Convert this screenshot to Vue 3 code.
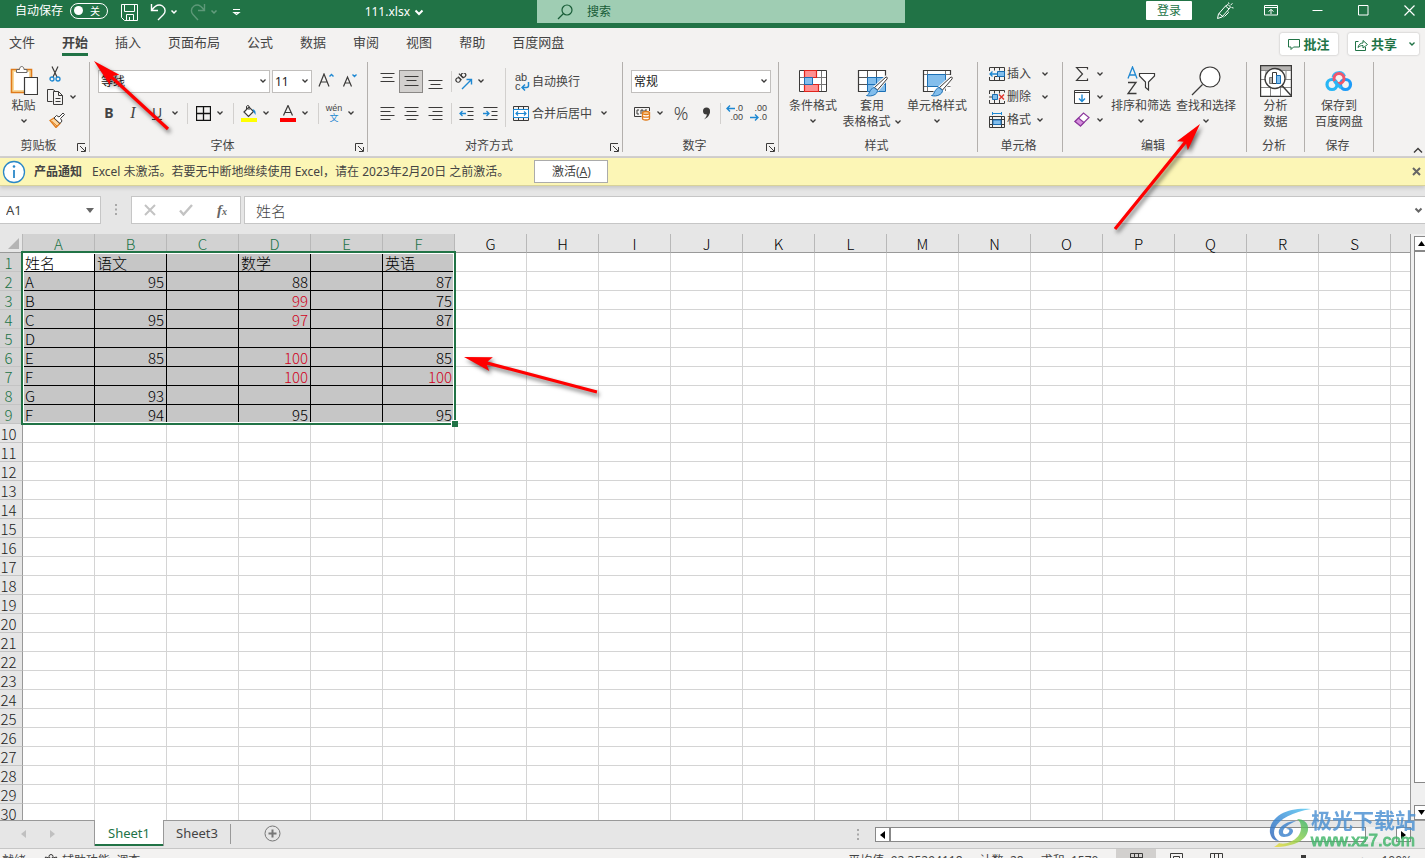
<script setup>
import { h } from 'vue'

const D = '#3b3a39'
const B = '#1e88d2'
const F = '#83beec'

// name: [width, height, markup]
const icons = {
  chev: [8, 6, `<path d="M1.5 1.5l2.5 2.5 2.5-2.5" stroke="${D}" stroke-width="1.3"/>`],
  chevWhite: [8, 6, '<path d="M1.5 1.5l2.5 2.5 2.5-2.5" stroke="#fff" stroke-width="1.5"/>'],
  chevBig: [10, 7, '<path d="M1.5 1.5l3.5 3.5 3.5-3.5" stroke="#fff" stroke-width="2"/>'],
  chevGrey: [9, 7, '<path d="M1.5 1.5l3 3 3-3" stroke="#666" stroke-width="2"/>'],
  chevGreen: [8, 6, '<path d="M1.5 1.5l2.5 2.5 2.5-2.5" stroke="#217346" stroke-width="1.4"/>'],
  collapse: [10, 7, `<path d="M1 5.500l4-4 4 4" stroke="${D}" stroke-width="1.400"/>`],
  save: [17, 17, '<path d="M.5.5h16v16h-13l-3-3zM3.500.5v7h10v-7M5.500 16.500v-6h7v6M8.500 13v3" stroke="#fff"/>'],
  undo: [17, 18, '<path d="M1.500 1v6.500h6.500M1.500 7.500C5 2.500 9 1 12.500 3c3.500 2.500 3 6.500 1 8.500L8 17" stroke="#fff" stroke-width="1.400"/>'],
  redo: [17, 18, '<path d="M14.500 1v6.500h-6.500M14.500 7.500C11 2.500 7 1 4 3 .5 5.500 1 9.500 3 11.500L8 17" stroke="#5d9878" stroke-width="1.400"/>'],
  qat: [9, 8, '<path d="M1 1.500h7M2 4.500l2.500 2 2.500-2z" stroke="#fff" stroke-width="1.200"/>'],
  search: [16, 16, '<circle cx="10" cy="6" r="5" stroke="#185c37" stroke-width="1.200"/><path d="M6.500 9.500L1 15" stroke="#185c37" stroke-width="1.300"/>'],
  pen: [18, 18, '<path d="M1.500 16.500l1-4.500 7-8 3.500 3-7 8zM3 11.500l4.500 3.500M9.500 4l2.500-1.500 2.500 2.500-1.500 2M12 9.500l.5 1-4 4M12.500.5l.5 1.500M16.500 1.500l-2 1.500M17.500 6l-2-.5" stroke="#fff"/>'],
  ribbonOpt: [14, 11, '<path d="M.5.5h13v9.500h-13zM.5 2.500h13M7 9V4.500M4.500 6.500L7 4.500l2.500 2" stroke="#fff"/>'],
  min: [11, 11, '<path d="M.5 5.500h10" stroke="#fff"/>'],
  max: [11, 11, '<path d="M.5.5h9.500v9.500h-9.500z" stroke="#fff"/>'],
  close: [11, 11, '<path d="M.5.5l10 10M10.500.5l-10 10" stroke="#fff" stroke-width="1.200"/>'],
  comment: [12, 11, '<path d="M.5.5h11v7.500h-6L3 10.500V8H.5z" stroke="#217346"/>'],
  share: [13, 13, '<path d="M3.500 3.500h-3v9h10v-3.500M3 9.500c.5-3 2.500-4.500 5-4.500V2.500l4.500 4-4.500 3.500V7.500C6 7.500 4.500 8 3 9.500z" stroke="#217346"/>'],
  paste: [28, 31, `<path d="M1.500 4.500h20v23h-20z" fill="#f9d999" stroke="#e07b1a" stroke-width="1.600"/><path d="M4 7h15v18H4z" fill="#fff"/><path d="M6.500 7.500v-3h3c0-4 4.500-4 4.500 0h3v3z" fill="#fff" stroke="#6b6967"/><path d="M14.500 12.500h13v17h-13z" fill="#fff" stroke="${D}" stroke-width="1.200"/>`],
  cut: [12, 16, `<path d="M3 .5l5 10.500M9 .5L4 11" stroke="${D}" stroke-width="1.200"/><circle cx="3" cy="13" r="2" stroke="${B}" stroke-width="1.300"/><circle cx="9" cy="13" r="2" stroke="${B}" stroke-width="1.300"/>`],
  copy: [16, 17, `<path d="M5.500 13.500h-5V1.500h5.500l2.500 2M6.500 3.500h5l4 4v9h-9z" stroke="${D}"/><path d="M11.500 3.500v4h4M8.500 10.500h5M8.500 13.500h5" stroke="${D}"/>`],
  brush: [16, 16, `<path d="M1 8.500l4-2.500 6 5.500-4 4z" fill="#fbd9a5" stroke="#e07b1a" stroke-width="1.300"/><path d="M3 9.500l5 4.500" stroke="#e07b1a"/><path d="M5 6l2.500-2.500L10 5l4-4 1.500 1.500-4 4 1.500 2.500-2 2.500z" fill="#fff" stroke="${D}"/>`],
  launcher: [9, 9, `<path d="M.5 8V.5H8M3 3l5 5M8.500 4v4.500H4" stroke="${D}"/>`],
  growA: [17, 16, `<path d="M1 13.500L6 1l5 12.500M3 9h6" stroke="${D}" stroke-width="1.200"/><path d="M11.500 3.500l2-2 2 2" stroke="${B}" stroke-width="1.400"/>`],
  shrinkA: [17, 16, `<path d="M1.500 13.500L5.500 4l4 9.500M3 10h5" stroke="${D}" stroke-width="1.200"/><path d="M10.500 1.500l2 2 2-2" stroke="${B}" stroke-width="1.400"/>`],
  borders: [15, 15, '<path d="M.5.5h14v14H.5zM7.500 0v15M0 7.500h15" stroke="#111" stroke-width="1.300"/>'],
  bucket: [16, 17, `<path d="M3 7l5-5 4.500 4.500-5 5z" fill="#fff" stroke="${D}" stroke-width="1.200"/><path d="M8 5V1.500c0-1.500-2.500-1.500-2.500.5v2" stroke="${D}"/><path d="M11.500 4c2.500.5 3.500 2.500 3 6l-2-3z" fill="${B}"/><path d="M0 13h16v4H0z" fill="#ffff00"/>`],
  fontColor: [16, 17, `<path d="M3.500 10.500L8 .5l4.500 10M5 7.500h6" stroke="${D}" stroke-width="1.200"/><path d="M0 13h16v4H0z" fill="#ff0000"/>`],
  alTop: [15, 17, `<path d="M.5.5h14M2.500 4.500h10M.5 8.500h14" stroke="${D}"/>`],
  alMid: [15, 17, `<path d="M.5 3.500h14M2.500 7.500h10M.5 12.500h14" stroke="${D}"/>`],
  alBot: [15, 17, `<path d="M.5 7.500h14M2.500 11.500h10M.5 15.500h14" stroke="${D}"/>`],
  alL: [15, 15, `<path d="M.5 1.500h14M.5 5.500h10M.5 9.500h14M.5 13.500h10" stroke="${D}"/>`],
  alC: [15, 15, `<path d="M.5 1.500h14M2.500 5.500h10M.5 9.500h14M2.500 13.500h10" stroke="${D}"/>`],
  alR: [15, 15, `<path d="M.5 1.500h14M4.500 5.500h10M.5 9.500h14M4.500 13.500h10" stroke="${D}"/>`],
  outdent: [15, 15, `<path d="M.5 1.500h14M8.500 5.500h6M8.500 9.500h6M.5 13.500h14" stroke="${D}"/><path d="M7 7.500H1M3.500 5L1 7.500 3.500 10" stroke="${B}" stroke-width="1.300"/>`],
  indent: [15, 15, `<path d="M.5 1.500h14M8.500 5.500h6M8.500 9.500h6M.5 13.500h14" stroke="${D}"/><path d="M0 7.500h6M3.500 5L6 7.500 3.500 10" stroke="${B}" stroke-width="1.300"/>`],
  orient: [18, 17, `<g transform="rotate(-45 6 7)" stroke="${D}" stroke-width="1.200"><circle cx="4" cy="5" r="2.200"/><path d="M6.300 2.500v5M9 1v6.500"/><circle cx="11.300" cy="5.300" r="2.200"/></g><path d="M7 16l9-9M11.500 6.500h5v5" stroke="${B}" stroke-width="1.400"/>`],
  wrapArrow: [9, 9, `<path d="M7.500 0v3.500c0 1.500-1 2-2 2H1.500M4 2.500L1 5.500l3 3" stroke="${B}" stroke-width="1.500"/>`],
  merge: [16, 15, `<path d="M.5.5h15v14H.5zM5.500.5v3M10.500.5v3M5.500 11.500v3M10.500 11.500v3" stroke="${D}"/><path d="M.5 3.500h15v8H.5z" fill="#fff" stroke="${B}"/><path d="M3 7.500h10M5 5.500l-2 2 2 2M11 5.500l2 2-2 2" stroke="${B}" stroke-width="1.200"/>`],
  currency: [17, 15, `<path d="M15.500 5V1.500H.5v9h7M5 4H3v4h2M7 8V4h2v4M11 8V4h2" stroke="${D}"/><path d="M8.500 7v5.500c0 2 7 2 7 0V7z" fill="#fff" stroke="#e07b1a" stroke-width="1.300"/><ellipse cx="12" cy="7" rx="3.500" ry="1.500" fill="#fbd9a5" stroke="#e07b1a" stroke-width="1.300"/><path d="M8.500 10c0 1.600 7 1.600 7 0" stroke="#e07b1a" stroke-width="1.300"/>`],
  comma: [9, 13, `<circle cx="4.500" cy="4" r="3.500" fill="${D}"/><path d="M8 4c0 4-2.500 7-6 8.500 2-2 3-4 3-6z" fill="${D}"/>`],
  arrL: [9, 7, `<path d="M9 3.500H1M4 .5L1 3.500l3 3" stroke="${B}" stroke-width="1.400"/>`],
  arrR: [9, 7, `<path d="M0 3.500h8M5 .5l3 3-3 3" stroke="${B}" stroke-width="1.400"/>`],
  condFmt: [28, 22, `<path d="M.5.5h27v21H.5z" fill="#fff"/><path d="M.5 7.500h27M.5 14.500h27M5.500 0v22M22.500 0v22" stroke="#777"/><path d="M.5.5h27v21H.5z" stroke="${D}"/><path d="M5.500.5h12v7h-12zM5.500 14.500h14v7h-14z" fill="#ff9090" stroke="#e0241b" stroke-width="1.200"/><path d="M5.500 7.500h8v7h-8z" fill="${F}" stroke="#1a6fb5"/>`],
  tableFmt: [32, 27, `<path d="M1.500.5h27v21h-27z" fill="#fff"/><path d="M10.500 7.500h18v14h-18z" fill="${F}"/><path d="M1.500 7.500h27M1.500 14.500h27M10.500 0v21M19.500 0v21" stroke="#555"/><path d="M28.500 7V.5h-27v21h9" stroke="${D}" stroke-width="1.200"/><path d="M10.500 7.500h18v14h-18zM10.500 14.500h18M19.500 7.500v14" stroke="#1a6fb5"/><path d="M29 7c1.500 0 1.500 1 1 2l-9.500 11-3-2.500z" fill="#fff" stroke="#f3f2f1" stroke-width="3"/><path d="M29 7c1.500 0 1.500 1 1 2l-9.500 11-3-2.500z" fill="#fff" stroke="${D}"/><path d="M17 17.500l3.500 3c0 4-6 6.500-11 5 3 0 2.500-6.500 7.500-8z" fill="${F}" stroke="#1a6fb5"/>`],
  cellStyle: [32, 27, `<path d="M1.500.5h27v21h-27z" fill="#fff"/><path d="M5.500 4.500h18v12h-18z" fill="${F}"/><path d="M1.500 4.500h27M1.500 16.500h27M5.500 0v21M23.500 0v21" stroke="#777"/><path d="M28.500 5V.5h-27v21h10" stroke="${D}" stroke-width="1.200"/><path d="M5.500 4.500h18v12h-18z" stroke="#1a6fb5"/><path d="M29 7c1.500 0 1.500 1 1 2l-9.500 11-3-2.500z" fill="#fff" stroke="#f3f2f1" stroke-width="3"/><path d="M29 7c1.500 0 1.500 1 1 2l-9.500 11-3-2.500z" fill="#fff" stroke="${D}"/><path d="M17 17.500l3.500 3c0 4-6 6.500-11 5 3 0 2.500-6.500 7.500-8z" fill="${F}" stroke="#1a6fb5"/>`],
  cellIns: [16, 14, `<path d="M.5 4V.5h15v13H.5V10M5.500.5v3M10.500.5v3M5.500 10v3.500M10.500 10v3.500M15.500 9.500h-10" stroke="${D}"/><path d="M8.500 4.500h7v5h-7z" fill="${F}" stroke="#1a6fb5"/><path d="M8 7H1M3.500 4.500L1 7l2.500 2.500" stroke="${B}" stroke-width="1.300"/>`],
  cellDel: [16, 14, `<path d="M.5 4V.5h15M.5 10v3.500h15M5.500.5v3M10.500.5v3M5.500 10v3.500M10.500 10v3.500M15.500.5v2M15.500 11v2.500" stroke="${D}"/><path d="M3.500 4.500h5v5h-5z" fill="${F}" stroke="#1a6fb5"/><path d="M0 7h3" stroke="${D}"/><path d="M10 4.500l5 5M15 4.500l-5 5" stroke="#e0342b" stroke-width="1.400"/>`],
  cellFmt: [16, 16, `<path d="M3.500 1.500h9M3.500 0v3M12.500 0v3" stroke="${B}"/><path d="M.5 4.500h15v11H.5zM3.500 4.500v11M12.500 4.500v11M.5 7.500h15M.5 12.500h15" stroke="${D}"/><path d="M4 8h8v4.500H4z" fill="${F}" stroke="#1a6fb5"/>`],
  sigma: [16, 14, `<path d="M13.500 2.500V.5H2.500L8.500 7l-6 6.500h11v-2" stroke="${D}" stroke-width="1.200"/>`],
  fill: [16, 14, `<path d="M.5.5h15v13H.5zM.5 2.500h15" fill="#fff" stroke="${D}"/><path d="M8 4.500v7M5 8.500l3 3 3-3" stroke="${B}" stroke-width="1.400"/>`],
  eraser: [16, 15, '<path d="M1 9.500l8.500-8.500 5.500 4.500-8.500 8.500z" fill="#fff" stroke="#8e3a9e" stroke-width="1.200"/><path d="M1 9.500l3.500-3.500 5.500 4.500-3.500 3.500z" fill="#d68fdd" stroke="#8e3a9e" stroke-width="1.200"/>'],
  sort: [30, 30, `<path d="M2 12.500L6.500 1l4.500 11.500M3.500 9h6" stroke="${B}" stroke-width="1.300"/><path d="M2 16.500h8L2 27.500h8.500" stroke="${D}" stroke-width="1.300"/><path d="M13.500 7.500h15v2.500l-6 6v8l-3-2.500V16l-6-6z" fill="#fff" stroke="${D}" stroke-width="1.200"/>`],
  find: [30, 30, `<circle cx="19" cy="11" r="10" fill="#fff" stroke="${D}" stroke-width="1.200"/><path d="M11.500 18.500L1 29" stroke="${D}" stroke-width="1.300"/>`],
  analyze: [32, 32, `<path d="M.5.5h31v31H.5z" fill="#fff"/><path d="M1 1h30v4H1z" fill="#b5b3b1"/><path d="M.5 5.500h31M.5 14.500h31M.5 22.500h31M10.500 22v9M20.500 22v9M6 5v9M26 5v9" stroke="#888"/><path d="M.5.5h31v31H.5z" stroke="${D}" stroke-width="1.400"/><circle cx="15" cy="13.500" r="10" fill="#fff" stroke="${D}" stroke-width="1.300"/><path d="M9.500 12.500h4v6h-4z" fill="#b5b3b1" stroke="#777"/><path d="M12.500 7.500h4v11h-4z" fill="#fff" stroke="${D}"/><path d="M16.500 10.500h4v8h-4z" fill="${F}" stroke="#1a6fb5"/><path d="M22 20.500l9 10" stroke="${D}" stroke-width="1.400"/>`],
  baidu: [28, 22, '<circle cx="7" cy="14.500" r="5" stroke="#27b6f5" stroke-width="3.200"/><circle cx="20.500" cy="14.500" r="5" stroke="#1d9bf8" stroke-width="3.200"/><path d="M8 7.500a6 6 0 0 1 11.500-1" stroke="#37b9f8" stroke-width="3"/><circle cx="14" cy="8.500" r="5" stroke="#f0566b" stroke-width="3"/><path d="M9.500 11c1.500 3 4 4.500 6.500 7" stroke="#27b6f5" stroke-width="3"/>'],
  info: [24, 24, '<circle cx="12" cy="12" r="10.500" fill="#fff" stroke="#2b88c8" stroke-width="1.300"/><path d="M12 10v8" stroke="#2b88c8" stroke-width="1.800"/><circle cx="12" cy="6.500" r="1.300" fill="#2b88c8"/>'],
  x: [9, 9, '<path d="M1 1l7 7M8 1L1 8" stroke="#666" stroke-width="2"/>'],
  fx0: [12, 12, '<path d="M1 1l10 10M11 1L1 11" stroke="#c3c3c3" stroke-width="2"/>'],
  fx1: [14, 12, '<path d="M1 6.500l3.500 4L13 1" stroke="#c3c3c3" stroke-width="2.400"/>'],
  dots: [3, 12, '<path d="M0 1h2M0 5.500h2M0 10h2" stroke="#a8a8a8" stroke-width="2"/>'],
  caret: [8, 5, '<path d="M0 0h8L4 5z" fill="#666"/>'],
  corner: [11, 11, '<path d="M11 0v11H0z" fill="#b4b4b4"/>'],
  triUp: [7, 5, '<path d="M0 5h7L3.500 0z" fill="#000"/>'],
  triDown: [7, 5, '<path d="M0 0h7L3.500 5z" fill="#000"/>'],
  triL: [5, 8, '<path d="M5 0v8L0 4z" fill="#000"/>'],
  triR: [5, 8, '<path d="M0 0v8l5-4z" fill="#000"/>'],
  navL: [5, 8, '<path d="M5 0v8L0 4z" fill="#c0c0c0"/>'],
  navR: [5, 8, '<path d="M0 0v8l5-4z" fill="#c0c0c0"/>'],
  plus: [17, 17, '<circle cx="8.500" cy="8.500" r="7.500" stroke="#777"/><path d="M8.500 4.500v8M4.500 8.500h8" stroke="#777" stroke-width="2"/>'],
  access: [14, 14, `<circle cx="7" cy="2.500" r="2" stroke="${D}"/><path d="M5 4L1.500 3l-.5 2 3 1.500V12l3-3 3 3V6.500l3-1.500-.5-2L9 4" stroke="${D}"/>`],
  vNormal: [13, 13, `<path d="M.5.5h12v12H.5zM.5 4.500h12M.5 8.500h12M4.500.5v12M8.500.5v12" stroke="${D}"/>`],
  vPage: [13, 13, `<path d="M.5.5h12v12H.5zM3.500 3.500h6v9h-6zM5 6.500h3M5 9.500h3" stroke="${D}"/>`],
  vBreak: [13, 13, `<path d="M.5.5h12v12H.5zM4.500.5v7h4v-7M4.500 7.500v5" stroke="${D}"/>`],
}
const Ic = (p) => {
  const [w, ht, m] = icons[p.name]
  return h('svg', { width: w, height: ht, viewBox: `0 0 ${w} ${ht}`, fill: 'none', 'aria-hidden': 'true', innerHTML: m })
}
Ic.props = ['name']

const tabs = ['文件', '开始', '插入', '页面布局', '公式', '数据', '审阅', '视图', '帮助', '百度网盘']
const cols = 'ABCDEFGHIJKLMNOPQRSTUVWXYZ'.split('')
const data = [
  ['姓名', '语文', '', '数学', '', '英语'],
  ['A', 95, '', 88, '', 87],
  ['B', '', '', 99, '', 75],
  ['C', 95, '', 97, '', 87],
  ['D', '', '', '', '', ''],
  ['E', 85, '', 100, '', 85],
  ['F', '', '', 100, '', 100],
  ['G', 93, '', '', '', ''],
  ['F', 94, '', 95, '', 95],
]
const cell = (r, c) => data[r - 1]?.[c] ?? ''
const cellClass = (r, c) => ({
  sel: r <= 9 && c < 6,
  active: r === 1 && c === 0,
  num: typeof cell(r, c) === 'number',
  high: typeof cell(r, c) === 'number' && cell(r, c) > 95,
})

const arrows = [
  [94, 61, 168, 129],
  [1200, 124, 1115, 229],
  [464, 357, 597, 392],
].map(([x1, y1, x2, y2]) => ({
  t: `translate(${x1} ${y1}) rotate(${(Math.atan2(y2 - y1, x2 - x1) * 180) / Math.PI})`,
  len: Math.hypot(x2 - x1, y2 - y1),
}))
</script>

<template>
  <div class="app">
    <header class="title">
      <div class="quick">
        <label class="auto">自动保存<span class="switch"><input type="checkbox" role="switch" /><i></i><b>关</b></span></label>
        <button class="q-save" aria-label="保存"><Ic name="save" /></button>
        <button class="q-undo" aria-label="撤消"><Ic name="undo" /><Ic name="chevWhite" /></button>
        <button class="q-redo" aria-label="恢复"><Ic name="redo" /><Ic name="chevWhite" class="faint" /></button>
        <button class="q-more" aria-label="自定义快速访问工具栏"><Ic name="qat" /></button>
        <button class="file">111.xlsx<Ic name="chevBig" /></button>
      </div>
      <label class="search"><Ic name="search" /><input type="text" placeholder="搜索" aria-label="搜索" /></label>
      <div class="win">
        <button class="login">登录</button>
        <button class="wb" aria-label="墨迹"><Ic name="pen" /></button>
        <button class="wb" aria-label="功能区显示选项"><Ic name="ribbonOpt" /></button>
        <button class="wb" aria-label="最小化"><Ic name="min" /></button>
        <button class="wb" aria-label="最大化"><Ic name="max" /></button>
        <button class="wb" aria-label="关闭"><Ic name="close" /></button>
      </div>
    </header>

    <nav class="tabs">
      <button v-for="t in tabs" :key="t" :class="{ on: t === '开始' }">{{ t }}</button>
      <div class="tab-right">
        <button class="pill note"><Ic name="comment" />批注</button>
        <button class="pill shr"><Ic name="share" />共享<Ic name="chevGreen" class="end" /></button>
      </div>
    </nav>

    <section class="ribbon">
      <div class="group g-clip">
        <div class="body">
          <button class="big"><span class="pic"><Ic name="paste" /></span>粘贴<span class="dn"><Ic name="chev" /></span></button>
          <div class="stack">
            <button aria-label="剪切"><Ic name="cut" /></button>
            <button aria-label="复制"><Ic name="copy" /><Ic name="chev" class="after" /></button>
            <button aria-label="格式刷"><Ic name="brush" /></button>
          </div>
        </div>
        <footer><span>剪贴板</span><Ic name="launcher" /></footer>
      </div>

      <div class="group g-font">
        <div class="rows">
          <div class="row r1">
            <label class="combo font"><select aria-label="字体"><option>等线</option></select><Ic name="chev" /></label>
            <label class="combo size"><select aria-label="字号"><option>11</option></select><Ic name="chev" /></label>
            <button class="t24" aria-label="增大字号"><Ic name="growA" /></button>
            <button class="t24" aria-label="减小字号"><Ic name="shrinkA" /></button>
          </div>
          <div class="row">
            <button class="t24 biu bold">B</button>
            <button class="t24 biu ital">I</button>
            <button class="t24 biu under">U</button>
            <button class="c12" aria-label="下划线选项"><Ic name="chev" /></button>
            <i class="sep"></i>
            <button class="t20" aria-label="边框"><Ic name="borders" /></button>
            <button class="c14" aria-label="边框选项"><Ic name="chev" /></button>
            <i class="sep"></i>
            <button class="t20" aria-label="填充颜色"><Ic name="bucket" /></button>
            <button class="c14" aria-label="填充选项"><Ic name="chev" /></button>
            <button class="t20 ml5" aria-label="字体颜色"><Ic name="fontColor" /></button>
            <button class="c14" aria-label="字体颜色选项"><Ic name="chev" /></button>
            <i class="sep"></i>
            <button class="t20 wen"><span>wén</span><span class="zh">文</span></button>
            <button class="c14" aria-label="拼音选项"><Ic name="chev" /></button>
          </div>
        </div>
        <footer><span>字体</span><Ic name="launcher" /></footer>
      </div>

      <div class="group g-align">
        <div class="split">
          <div class="rows">
            <div class="row">
              <button class="t24" aria-label="顶端对齐"><Ic name="alTop" /></button>
              <button class="t24 picked" aria-label="垂直居中"><Ic name="alMid" /></button>
              <button class="t24" aria-label="底端对齐"><Ic name="alBot" /></button>
              <i class="sep tight"></i>
              <button class="t20" aria-label="方向"><Ic name="orient" /></button>
              <button class="c14" aria-label="方向选项"><Ic name="chev" /></button>
            </div>
            <div class="row">
              <button class="t24" aria-label="左对齐"><Ic name="alL" /></button>
              <button class="t24" aria-label="居中"><Ic name="alC" /></button>
              <button class="t24" aria-label="右对齐"><Ic name="alR" /></button>
              <i class="sep tight"></i>
              <button class="t24" aria-label="减少缩进量"><Ic name="outdent" /></button>
              <button class="t24" aria-label="增加缩进量"><Ic name="indent" /></button>
            </div>
          </div>
          <i class="tall"></i>
          <div class="rows wide">
            <div class="row"><button class="txt"><span class="abc"><span>ab</span><span>c<Ic name="wrapArrow" /></span></span>自动换行</button></div>
            <div class="row"><button class="txt"><span class="slot"><Ic name="merge" /></span>合并后居中</button><button class="c14 ml5" aria-label="合并选项"><Ic name="chev" /></button></div>
          </div>
        </div>
        <footer><span>对齐方式</span><Ic name="launcher" /></footer>
      </div>

      <div class="group g-num">
        <div class="rows">
          <div class="row"><label class="combo fmt"><select aria-label="数字格式"><option>常规</option></select><Ic name="chev" /></label></div>
          <div class="row">
            <button class="t24" aria-label="会计数字格式"><Ic name="currency" /></button>
            <button class="c12" aria-label="货币选项"><Ic name="chev" /></button>
            <button class="pct">%</button>
            <button class="t20" aria-label="千位分隔样式"><Ic name="comma" /></button>
            <i class="sep tight"></i>
            <button class="t24 dec"><span><Ic name="arrL" />.0</span><span>.00</span></button>
            <button class="t24 dec"><span>.00</span><span><Ic name="arrR" />.0</span></button>
          </div>
        </div>
        <footer><span>数字</span><Ic name="launcher" /></footer>
      </div>

      <div class="group g-style">
        <div class="body">
          <button class="big"><span class="pic"><Ic name="condFmt" /></span>条件格式<span class="dn"><Ic name="chev" /></span></button>
          <button class="big w60"><span class="pic low"><Ic name="tableFmt" /></span>套用<span class="in">表格格式<Ic name="chev" /></span></button>
          <button class="big w60"><span class="pic low"><Ic name="cellStyle" /></span>单元格样式<span class="dn"><Ic name="chev" /></span></button>
        </div>
        <footer><span>样式</span></footer>
      </div>

      <div class="group g-cell">
        <div class="stack">
          <button><Ic name="cellIns" />插入<Ic name="chev" class="far" /></button>
          <button><Ic name="cellDel" />删除<Ic name="chev" class="far" /></button>
          <button><Ic name="cellFmt" />格式<Ic name="chev" class="near" /></button>
        </div>
        <footer><span>单元格</span></footer>
      </div>

      <div class="group g-edit">
        <div class="body">
          <div class="stack">
            <button aria-label="自动求和"><Ic name="sigma" /><Ic name="chev" class="after" /></button>
            <button aria-label="填充"><Ic name="fill" /><Ic name="chev" class="after" /></button>
            <button aria-label="清除"><Ic name="eraser" /><Ic name="chev" class="after" /></button>
          </div>
          <button class="big w60"><span class="pic"><Ic name="sort" /></span>排序和筛选<span class="dn"><Ic name="chev" /></span></button>
          <button class="big w60"><span class="pic"><Ic name="find" /></span>查找和选择<span class="dn"><Ic name="chev" /></span></button>
        </div>
        <footer><span>编辑</span></footer>
      </div>

      <div class="group g-ana">
        <div class="body mid"><button class="big"><span class="pic"><Ic name="analyze" /></span>分析<span>数据</span></button></div>
        <footer><span>分析</span></footer>
      </div>
      <div class="group g-save">
        <div class="body mid"><button class="big"><span class="pic"><Ic name="baidu" /></span>保存到<span>百度网盘</span></button></div>
        <footer><span>保存</span></footer>
      </div>
      <button class="collapse" aria-label="折叠功能区"><Ic name="collapse" /></button>
    </section>

    <section class="notice">
      <Ic name="info" /><strong>产品通知</strong>
      <span>Excel 未激活。若要无中断地继续使用 Excel，请在 2023年2月20日 之前激活。</span>
      <button class="act">激活(<u>A</u>)</button>
      <button class="nx" aria-label="关闭通知"><Ic name="x" /></button>
    </section>

    <section class="fbar">
      <label class="namebox"><input type="text" value="A1" aria-label="名称框" /><Ic name="caret" /></label>
      <Ic name="dots" class="grip" />
      <div class="fbtns">
        <button aria-label="取消"><Ic name="fx0" /></button>
        <button aria-label="输入"><Ic name="fx1" /></button>
        <button class="fx">f<small>x</small></button>
      </div>
      <label class="finput"><input type="text" value="姓名" aria-label="编辑栏" /><Ic name="chevGrey" /></label>
    </section>

    <main class="work">
      <div class="gridwrap">
        <table>
          <colgroup><col class="rh" /><col v-for="c in cols" :key="c" /></colgroup>
          <thead>
            <tr>
              <th class="cnr"><Ic name="corner" /></th>
              <th v-for="(c, i) in cols" :key="c" :class="{ hot: i < 6 }">{{ c }}</th>
            </tr>
          </thead>
          <tbody>
            <tr v-for="r in 60" :key="r">
              <th :class="{ hot: r < 10 }">{{ r }}</th>
              <td v-for="(c, i) in cols" :key="c" :class="cellClass(r, i)">{{ cell(r, i) }}</td>
            </tr>
          </tbody>
        </table>
        <div class="selection"><i></i></div>
      </div>
      <div class="vscroll">
        <button aria-label="向上滚动"><Ic name="triUp" /></button>
        <div class="vthumb"></div>
        <button aria-label="向下滚动"><Ic name="triDown" /></button>
      </div>
    </main>

    <section class="sheets">
      <button class="nav" aria-label="上一张"><Ic name="navL" /></button>
      <button class="nav" aria-label="下一张"><Ic name="navR" /></button>
      <button class="sheet on">Sheet1</button>
      <button class="sheet">Sheet3</button>
      <i class="ssep"></i>
      <button class="add" aria-label="新工作表"><Ic name="plus" /></button>
      <div class="hs">
        <Ic name="dots" />
        <div class="hscroll">
          <button aria-label="向左滚动"><Ic name="triL" /></button>
          <div class="hthumb"></div>
          <button class="last" aria-label="向右滚动"><Ic name="triR" /></button>
        </div>
      </div>
    </section>

    <footer class="status">
      <div class="status-in">
        <span>就绪</span>
        <span class="acc"><Ic name="access" />辅助功能: 调查</span>
        <div class="stats"><span>平均值: 92.35294118</span><span>计数: 28</span><span>求和: 1570</span></div>
        <div class="views">
          <button class="cur" aria-label="普通"><Ic name="vNormal" /></button>
          <button aria-label="页面布局视图"><Ic name="vPage" /></button>
          <button aria-label="分页预览"><Ic name="vBreak" /></button>
        </div>
        <input type="range" aria-label="缩放" />
        <button class="zoom-in">+</button>
        <span class="pc">100%</span>
      </div>
    </footer>

    <div class="mark">
      <svg width="42" height="42" viewBox="0 0 42 42" fill="none">
        <defs>
          <linearGradient id="mb" x1="0" y1="1" x2="1" y2="0"><stop offset="0" stop-color="#2c62b8" /><stop offset=".5" stop-color="#3b8fd8" /><stop offset="1" stop-color="#56ccf4" /></linearGradient>
          <linearGradient id="mg" x1="0" y1="1" x2="1" y2="0"><stop offset="0" stop-color="#f0dc3c" /><stop offset=".5" stop-color="#8fd04a" /><stop offset="1" stop-color="#35b36a" /></linearGradient>
        </defs>
        <path d="M42 1C32 0 20 1 12 6 4 11 0 18 1 25c1 5 4 8 9 8-5-3-6-8-4-13C10 11 24 4 42 1z" fill="url(#mb)" />
        <path d="M27 13c-8 0-15 4-17 9-1 4 1 7 5 7 5 0 9-3 9-6 0-3-4-4-7-2 3 0 4 1 3 3-2 3-6 3-6 0 0-4 6-8 13-11z" fill="#3b82cc" />
        <path d="M28 11c7 0 12 4 11 11-1 9-12 17-34 17 2-1 4-3 5-4 2 1 7 1 11-1 7-3 11-8 11-14 0-4-1-7-4-9z" fill="url(#mg)" />
      </svg>
      <div><b>极光下载站</b><em>www.xz7.com</em></div>
    </div>

    <svg class="arrows" width="100%" height="100%" aria-hidden="true">
      <g v-for="a in arrows" :key="a.t" :transform="a.t" fill="#ff0000">
        <path :d="`M0 0L28-7 24-1.600H${a.len}V1.600H24L28 7z`" />
      </g>
    </svg>
  </div>
</template>

<style>
html, body { height: 100%; overflow: hidden; }
</style>

<style scoped>
.app { position: relative; display: flex; flex-direction: column; height: 100vh; overflow: hidden; background: #e6e6e6; color: #444; font: 12px/16px "Noto Sans", "Noto Sans CJK SC", sans-serif; }
.app *, .app *::before { box-sizing: border-box; }
button { display: flex; align-items: center; justify-content: center; margin: 0; padding: 0; border: 0; background: none; color: inherit; font: inherit; white-space: nowrap; flex: none; }
input, select { margin: 0; padding: 0; border: 0; outline: 0; background: none; color: inherit; font: inherit; min-width: 0; }
svg { display: block; flex: none; }
i { font-style: normal; }

.title { flex: none; height: 28px; display: grid; grid-template-columns: 537fr 368fr 520fr; background: #217346; color: #fff; }
.quick { display: flex; align-items: center; height: 21px; padding-left: 15px; }
.quick button { padding-top: 3px; }
.auto { display: flex; align-items: center; gap: 7px; }
.switch { position: relative; display: flex; align-items: center; width: 38px; height: 16px; border: 1px solid #fff; border-radius: 8px; padding: 0 7px 0 3px; justify-content: space-between; }
.switch input { position: absolute; inset: 0; opacity: 0; }
.switch i { width: 9px; height: 9px; border-radius: 50%; background: #fff; }
.switch b { font-size: 10px; font-weight: 400; line-height: 14px; }
.q-save { margin-left: 13px; }
.q-undo { margin-left: 12px; gap: 3px; }
.q-redo { margin-left: 12px; gap: 3px; }
.q-more { margin-left: 14px; }
.faint { opacity: .3; }
.file { margin: 0 0 0 auto; padding-right: 113px; gap: 4px; height: 24px; }
.search { display: flex; align-items: center; height: 23px; padding: 0 20px; gap: 14px; background: #9fcdb3; color: #185c37; }
.search input { flex: 1; height: 20px; }
.search input::placeholder { color: #185c37; opacity: 1; }
.win { display: flex; justify-content: flex-end; align-items: center; height: 21px; }
.login { width: 46px; height: 19px; margin-right: 10px; background: #fff; color: #217346; border-radius: 1px; }
.wb { width: 46px; height: 20px; }
.wb:last-child { width: 39px; padding-left: 8px; }

.tabs { flex: none; display: flex; align-items: flex-start; gap: 27px; height: 32px; padding: 5px 6px 0 9px; background: #f3f2f1; font-size: 13px; }
.tabs > button { height: 23px; padding: 0 0 3px; border-bottom: 3px solid transparent; }
.tabs > button.on { font-weight: 700; border-bottom-color: #217346; }
.tab-right { display: flex; gap: 10px; margin-left: auto; }
.pill { height: 22px; background: #fff; border-radius: 2px; box-shadow: 0 0 2px #aaa; color: #217346; font-weight: 700; gap: 3px; }
.note { width: 58px; }
.shr { width: 71px; justify-content: flex-start; padding-left: 7px; }
.pill .end { margin-left: 8px; }

.ribbon { flex: none; position: relative; display: flex; height: 98px; padding-top: 2px; background: #f3f2f1; border-bottom: 2px solid #d2d0ce; }
.group { flex: none; display: flex; flex-direction: column; justify-content: space-between; height: 90px; border-right: 1px solid #b3b0ad; }
.group > footer { display: flex; align-items: center; height: 12px; padding-right: 3px; }
.group > footer span { flex: 1; text-align: center; }
.group > footer svg { margin-top: 2px; }
.g-clip { width: 90px; } .g-font { width: 278px; } .g-align { width: 255px; } .g-num { width: 156px; } .g-style { width: 199px; }
.g-cell { width: 85px; } .g-edit { width: 184px; } .g-ana { width: 58px; } .g-save { width: 69px; }
.body { display: flex; }
.mid { justify-content: center; }
.big { flex-direction: column; justify-content: flex-start; line-height: 16px; padding-top: 1px; }
.pic { display: flex; align-items: center; justify-content: center; height: 35px; }
.low { padding: 5px 0 0 2px; }
.dn { height: 14px; display: flex; align-items: center; }
.in { display: flex; align-items: center; gap: 3px; }
.w60 { width: 60px; }
.g-clip .big { width: 47px; }
.stack { display: flex; flex-direction: column; }
.stack button { height: 23px; justify-content: flex-start; gap: 2px; }
.g-clip .stack button:not(:nth-child(2)) { padding-left: 2px; }
.stack .after { margin-left: 4px; }
.g-style .body { gap: 5px; padding-left: 10px; }
.g-cell .stack { padding-left: 11px; }
.stack .far { margin-left: 8px; }
.stack .near { margin-left: 3px; }
.g-edit .stack { padding-left: 11px; width: 48px; }
.g-edit .w60 + .w60 { margin-left: 5px; }

.rows { display: flex; flex-direction: column; gap: 8px; padding: 7px 0 0 7px; }
.row { display: flex; align-items: center; height: 24px; }
.t24 { width: 24px; height: 22px; }
.t20 { width: 20px; height: 22px; }
.c14 { width: 14px; height: 22px; }
.c12 { width: 12px; height: 22px; }
.ml5 { margin-left: 5px; }
.sep { width: 1px; height: 21px; margin: 0 5px 0 6px; background: #d2d0ce; }
.tight { margin: 0 2px 0 4px; }
.tall { width: 1px; height: 59px; margin: 6px 0 0 3px; background: #d2d0ce; }
.split { display: flex; }
.split > .rows:first-child { width: 134px; }
.wide { padding-left: 6px; }
.combo { display: grid; align-items: center; height: 23px; border: 1px solid #c1bfbd; background: #fff; color: #222; }
.combo > * { grid-area: 1 / 1; }
.combo select { appearance: none; width: 100%; height: 21px; padding: 1px 0 0 2px; }
.combo svg { justify-self: end; margin-right: 2px; pointer-events: none; }
.font { width: 172px; margin: 0 2px 0 1px; }
.size { width: 40px; margin-right: 2px; }
.fmt { width: 140px; margin-left: 1px; }
.biu { font-size: 14px; }
.bold { font-weight: 700; }
.ital { font-family: "Liberation Serif", serif; font-style: italic; font-size: 16px; }
.under { text-decoration: underline; }
.wen { flex-direction: column; font: 9px/9px "Liberation Sans", "Noto Sans CJK SC", sans-serif; }
.zh { color: #1e88d2; line-height: 10px; }
.picked { background: #d2d0ce; border: 1px solid #8a8886; height: 23px; }
.txt { height: 22px; gap: 2px; padding-top: 1px; }
.slot { width: 18px; display: flex; justify-content: center; }
.abc { width: 18px; display: flex; flex-direction: column; align-items: flex-start; padding-left: 3px; font: 11px/9px "Liberation Sans", sans-serif; }
.abc span { display: flex; height: 9px; }
.pct { width: 30px; font-size: 18px; font-weight: 300; }
.dec { flex-direction: column; font: 9px/9px "Liberation Sans", sans-serif; align-items: flex-end; padding-right: 4px; }
.dec span { display: flex; align-items: center; height: 9px; }
.collapse { margin: 85px 2px 0 auto; width: 10px; height: 7px; }

.notice { flex: none; position: relative; z-index: 1; display: flex; align-items: center; height: 28px; padding: 0 4px 0 2px; background: #fcf6b6; border-bottom: 1px solid #d8d29a; box-shadow: 0 2px 4px rgba(0, 0, 0, .14); }
.notice strong { margin: 0 10px 0 8px; }
.act { width: 74px; height: 23px; margin-left: 25px; background: #fff; border: 1px solid #ababab; }
.nx { margin-left: auto; }

.fbar { flex: none; display: flex; align-items: center; height: 48px; padding: 0; }
.namebox, .fbtns, .finput { display: flex; align-items: center; height: 28px; background: #fff; border: 1px solid #c6c6c6; }
.namebox { width: 101px; border-left: 0; padding: 0 6px; }
.namebox input { flex: 1; width: 60px; font-size: 13px; }
.grip { margin: 0 13px 0 14px; }
.fbtns { width: 110px; margin-right: 3px; }
.fbtns button { width: 36px; height: 26px; }
.fx { font: italic 700 15px/20px "Liberation Serif", serif; color: #666; }
.fx small { font-size: 10px; padding-top: 3px; }
.finput { flex: 1; border-right: 0; padding: 0 2px 0 11px; font: 300 15px/20px "Noto Sans CJK SC", sans-serif; }
.finput input { flex: 1; height: 24px; }

.work { flex: 1; min-height: 0; display: flex; }
.gridwrap { flex: 1; min-width: 0; position: relative; overflow: hidden; border-right: 1px solid #999; }
table { table-layout: fixed; width: 1895px; border-collapse: separate; border-spacing: 0; font: 300 15px/17px "Noto Sans CJK SC", sans-serif; color: #000; }
col { width: 72px; } col.rh { width: 23px; }
th, td { height: 19px; padding: 1px 0 0; font-weight: 300; }
td { background: #fff; border-right: 1px solid #d4d4d4; border-bottom: 1px solid #d4d4d4; padding: 1px 2px 0; }
thead th { border-right: 1px solid #b8b8b8; border-bottom: 1px solid #999; }
tbody th { border-right: 1px solid #999; border-bottom: 1px solid #c4c4c4; padding-right: 5px; color: #222; }
.cnr { padding: 0 3px 3px 8px; border-right-color: #b8b8b8; vertical-align: bottom; }
.hot, tbody th.hot { background: #d2d2d2; color: #217346; }
.sel { background: #c6c6c6; border-color: #000; }
.active { background: #fff; }
.num { text-align: right; }
.high { color: #d0021b; }
.selection { position: absolute; left: 21px; top: 17px; width: 435px; height: 174px; border: 2px solid #217346; box-shadow: inset 0 0 0 1px #fff; }
.selection i { position: absolute; right: -4px; bottom: -4px; width: 7px; height: 7px; background: #217346; border: 1px solid #fff; border-width: 1px 0 0 1px; }
.vscroll { flex: none; display: flex; flex-direction: column; width: 14px; padding: 2px 0 0 3px; background: #f0f0f0; }
.vscroll button { height: 15px; width: 15px; background: #fff; border: 1px solid #888; }
.vthumb { flex: 1; width: 15px; margin-bottom: 22px; background: #fff; border: 1px solid #888; }

.sheets { flex: none; display: flex; align-items: flex-start; height: 28px; border-top: 1px solid #999; font-size: 13px; }
.nav { width: 29px; height: 25px; }
.nav:first-child { margin-left: 9px; }
.sheet { height: 23px; padding: 0 12px; }
.sheet.on { margin: -1px 0 0 27px; padding: 0; width: 70px; height: 26px; background: #fff; border: 1px solid #999; border-width: 0 1px; box-shadow: inset 0 -2px #217346; color: #217346; }
.ssep { width: 1px; height: 20px; margin-top: 3px; background: #999; }
.add { margin: 4px 0 0 33px; }
.hs { display: flex; align-items: center; margin: 6px 14px 0 auto; width: 554px; gap: 15px; height: 15px; }
.hscroll { flex: 1; display: flex; height: 15px; background: #f0f0f0; }
.hscroll button { width: 15px; height: 15px; background: #fff; border: 1px solid #888; }
.hthumb { flex: 1; margin-right: 30px; background: #fff; border: 1px solid #888; }
.status { flex: none; height: 10px; overflow: hidden; background: #f3f2f1; border-top: 1px solid #c6c6c6; }
.status-in { display: flex; align-items: center; height: 23px; padding: 0 13px 0 2px; }
.acc { display: flex; align-items: center; gap: 4px; margin-left: 18px; }
.stats { display: flex; gap: 17px; margin-left: auto; margin-right: 18px; }
.views { display: flex; }
.views button { width: 40px; height: 23px; align-items: flex-start; padding-top: 4px; }
.views .cur { background: #d2d0ce; }
.status input { appearance: none; width: 100px; height: 12px; margin-left: 17px; }
.status input::-webkit-slider-thumb { appearance: none; width: 5px; height: 12px; background: #3b3a39; }
.zoom-in { width: 14px; margin-left: 2px; }
.pc { margin-left: 12px; }

.mark { position: absolute; right: 9px; bottom: 7px; display: flex; align-items: center; opacity: .82; }
.mark div { display: flex; flex-direction: column; }
.mark b { font: 700 21px/24px "Noto Sans CJK SC", sans-serif; color: #4a90d2; }
.mark em { font: 17px/20px "Liberation Sans", sans-serif; color: #3fb568; -webkit-text-stroke: 1px #3fb568; }
.arrows { position: absolute; left: 0; top: 0; z-index: 2; pointer-events: none; filter: drop-shadow(2px 3px 2px rgba(0, 0, 0, .55)); }
</style>
